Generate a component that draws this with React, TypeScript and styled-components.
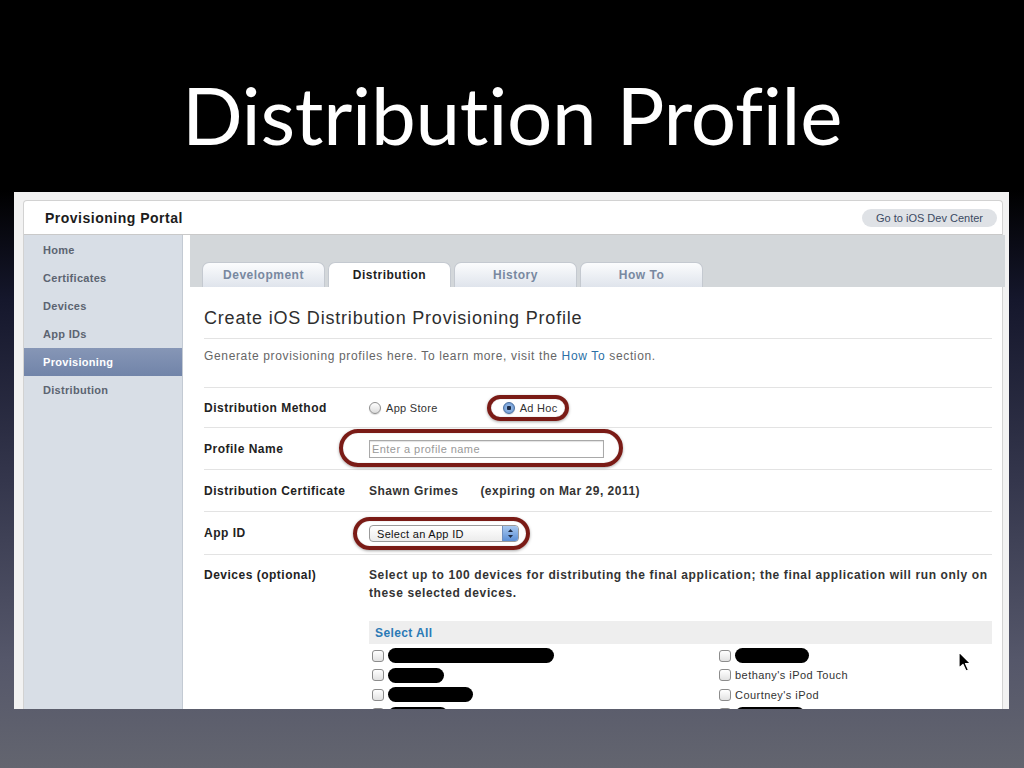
import React from 'react';
import styled, { createGlobalStyle } from 'styled-components';

const GlobalStyle = createGlobalStyle`
  html, body {
    margin: 0;
    padding: 0;
  }
  body {
    width: 1024px;
    height: 768px;
    overflow: hidden;
    background: linear-gradient(
      to bottom,
      #000 0px,
      #000 190px,
      #15172c 300px,
      #34364c 480px,
      #55576a 660px,
      #63656f 768px
    );
    font-family: "Liberation Sans", Arial, sans-serif;
  }
`;

const Slide = styled.div`
  width: 1024px;
  height: 768px;
  display: flex;
  flex-direction: column;
`;

const TitleArea = styled.div`
  height: 192px;
  box-sizing: border-box;
  padding-top: 74px;
  display: flex;
  justify-content: center;
`;

const SlideTitle = styled.h1`
  margin: 0;
  font-family: Lato, "Open Sans", sans-serif;
  font-weight: 400;
  font-size: 80px;
  line-height: 80px;
  color: #fff;
  font-variant-ligatures: none;
  font-feature-settings: "liga" 0;
  letter-spacing: -0.3px;
`;

const Shot = styled.div`
  position: relative;
  margin: 0 15px 0 14px;
  height: 517px;
  box-sizing: border-box;
  padding: 8px 6px 0 9px;
  background: #f2f2f2;
  overflow: hidden;
`;

const Page = styled.div`
  background: #fff;
  border: 1px solid #d2d2d2;
  border-bottom: none;
  border-radius: 4px 4px 0 0;
  height: 100%;
  display: flex;
  flex-direction: column;
`;

const Header = styled.div`
  height: 33px;
  flex-shrink: 0;
  display: flex;
  align-items: center;
  justify-content: space-between;
  padding: 0 5px 0 21px;
  border-bottom: 1px solid #c9c9c9;
`;

const PortalName = styled.div`
  font-size: 14px;
  font-weight: bold;
  letter-spacing: 0.5px;
  color: #1c1c1c;
`;

const DevCenterButton = styled.div`
  width: 135px;
  height: 18px;
  border-radius: 9px;
  background: #dfe2e6;
  color: #3b4a63;
  font-size: 11px;
  display: flex;
  align-items: center;
  justify-content: center;
`;

const Body = styled.div`
  flex: 1;
  display: grid;
  grid-template-columns: 159px 1fr;
  min-height: 0;
`;

const Sidebar = styled.nav`
  background: #d8dee6;
  border-right: 1px solid #c3cad3;
  padding-top: 1px;
  display: flex;
  flex-direction: column;
`;

const NavItem = styled.div<{ $active?: boolean }>`
  height: 28px;
  display: flex;
  align-items: center;
  padding-left: 19px;
  font-size: 11px;
  font-weight: bold;
  letter-spacing: 0.3px;
  color: ${(p) => (p.$active ? '#fff' : '#5c6471')};
  background: ${(p) =>
    p.$active ? 'linear-gradient(to bottom, #8696b6, #7184a9)' : 'transparent'};
`;

const Content = styled.div`
  padding-left: 7px;
  display: flex;
  flex-direction: column;
  min-width: 0;
`;

const TabBand = styled.div`
  height: 52px;
  flex-shrink: 0;
  background: #d3d7da;
  margin-right: -3px;
  display: flex;
  align-items: flex-end;
  gap: 3px;
  padding-left: 12px;
`;

const Tab = styled.div<{ $active?: boolean }>`
  width: 123px;
  height: 25px;
  box-sizing: border-box;
  border: 1px solid #c4c9d0;
  border-bottom: none;
  border-radius: 7px 7px 0 0;
  display: flex;
  align-items: center;
  justify-content: center;
  font-size: 12px;
  font-weight: bold;
  letter-spacing: 0.5px;
  color: ${(p) => (p.$active ? '#1e1e1e' : '#7888a0')};
  background: ${(p) =>
    p.$active ? '#fff' : 'linear-gradient(to bottom, #fbfcfd, #dfe4ec)'};
`;

const Main = styled.div`
  padding: 0 10px 0 14px;
`;

const Heading = styled.h2`
  margin: 0;
  padding: 20px 0 9px;
  font-size: 18px;
  line-height: 22px;
  font-weight: normal;
  letter-spacing: 0.8px;
  color: #2e2e2e;
  border-bottom: 1px solid #e3e3e3;
`;

const Intro = styled.p`
  margin: 0;
  padding: 9px 0 23px;
  font-size: 12px;
  line-height: 16px;
  letter-spacing: 0.65px;
  color: #666;
  border-bottom: 1px solid #e3e3e3;
`;

const Link = styled.span`
  color: #2a6fa6;
`;

const Row = styled.div<{ $h?: number; $top?: boolean }>`
  display: grid;
  grid-template-columns: 165px 1fr;
  align-items: ${(p) => (p.$top ? 'start' : 'center')};
  height: ${(p) => (p.$h ? `${p.$h}px` : 'auto')};
  padding-top: ${(p) => (p.$top ? '11px' : '0')};
  border-bottom: ${(p) => (p.$top ? 'none' : '1px solid #e3e3e3')};
`;

const Label = styled.div`
  font-size: 12px;
  font-weight: bold;
  letter-spacing: 0.5px;
  color: #222;
  line-height: 18px;
`;

const Options = styled.div`
  display: flex;
  align-items: center;
  gap: 65px;
`;

const RadioOption = styled.label`
  display: inline-flex;
  align-items: center;
  gap: 5px;
  font-size: 11px;
  letter-spacing: 0.3px;
  color: #333;
`;

const RadioDot = styled.span<{ $checked?: boolean }>`
  width: 12px;
  height: 12px;
  box-sizing: border-box;
  border-radius: 50%;
  border: 1px solid ${(p) => (p.$checked ? '#4a6fa0' : '#8e8e8e')};
  background: ${(p) =>
    p.$checked
      ? 'radial-gradient(circle, #1b2a44 0 2px, #8fb4e3 2.5px, #5f8dcc 100%)'
      : 'linear-gradient(to bottom, #fff, #dcdcdc)'};
  box-shadow: 0 1px 1px rgba(0, 0, 0, 0.15);
`;

const Ringed = styled.span<{ $t: number; $r: number; $b: number; $l: number }>`
  position: relative;
  display: inline-flex;
  align-items: center;

  &::after {
    content: '';
    position: absolute;
    top: ${(p) => -p.$t}px;
    right: ${(p) => -p.$r}px;
    bottom: ${(p) => -p.$b}px;
    left: ${(p) => -p.$l}px;
    border: 4px solid #7a1b16;
    border-radius: 22px;
    box-shadow: 0 1px 3px rgba(0, 0, 0, 0.35), inset 0 0 1px rgba(0, 0, 0, 0.4);
    pointer-events: none;
  }
`;

const TextInput = styled.input`
  width: 235px;
  height: 18px;
  box-sizing: border-box;
  margin: 0;
  border: 1px solid #a9a9a9;
  box-shadow: inset 0 1px 1px rgba(0, 0, 0, 0.12);
  padding: 0 2px;
  font-family: "Liberation Sans", Arial, sans-serif;
  font-size: 11px;
  letter-spacing: 0.45px;
  outline: none;

  &::placeholder {
    color: #999;
  }
`;

const CertValue = styled.div`
  display: flex;
  gap: 22px;
  font-size: 12px;
  font-weight: bold;
  letter-spacing: 0.5px;
  color: #333;
`;

const SelectBox = styled.div`
  width: 150px;
  height: 17px;
  box-sizing: border-box;
  border: 1px solid #9a9a9a;
  border-radius: 4px;
  background: linear-gradient(to bottom, #fff, #ececec);
  display: flex;
  align-items: center;
  justify-content: space-between;
  padding-left: 7px;
  font-size: 11px;
  letter-spacing: 0.3px;
  color: #111;
  overflow: hidden;
`;

const Stepper = styled.span`
  width: 15px;
  height: 100%;
  background: linear-gradient(to bottom, #a9c9f0, #5b8fd6);
  border-left: 1px solid #6f8fbf;
  display: flex;
  align-items: center;
  justify-content: center;
`;

const DevicesText = styled.div`
  font-size: 12px;
  font-weight: bold;
  line-height: 18px;
  letter-spacing: 0.62px;
  color: #333;
`;

const SelectAllBar = styled.div`
  margin-top: 19px;
  height: 23px;
  background: #eeeeee;
  display: flex;
  align-items: center;
  padding-left: 6px;
  font-size: 12px;
  font-weight: bold;
  letter-spacing: 0.4px;
  color: #2b7ab6;
`;

const DeviceGrid = styled.div`
  display: grid;
  grid-template-columns: 347px 1fr;
  padding: 2px 0 0 3px;
`;

const DeviceRow = styled.div`
  height: 19.5px;
  display: flex;
  align-items: center;
  gap: 4px;
  font-size: 11px;
  letter-spacing: 0.45px;
  color: #333;
`;

const CheckBox = styled.span`
  width: 12px;
  height: 12px;
  box-sizing: border-box;
  border: 1px solid #8c8c8c;
  border-radius: 3px;
  background: linear-gradient(to bottom, #fff, #e2e2e2);
  flex-shrink: 0;
`;

const Redacted = styled.span<{ $w: number }>`
  width: ${(p) => p.$w}px;
  height: 15px;
  border-radius: 8px;
  background: #000;
`;

const Cursor = styled.svg`
  position: absolute;
  left: 944px;
  top: 459px;
`;

const leftDevices = [166, 56, 85, 60];
const rightDevices: (number | string)[] = [74, "bethany's iPod Touch", "Courtney's iPod", 70];

const navItems = ['Home', 'Certificates', 'Devices', 'App IDs', 'Provisioning', 'Distribution'];
const tabs = ['Development', 'Distribution', 'History', 'How To'];

export default function App() {
  return (
    <Slide>
      <GlobalStyle />
      <TitleArea>
        <SlideTitle>Distribution Profile</SlideTitle>
      </TitleArea>
      <Shot>
        <Page>
          <Header>
            <PortalName>Provisioning Portal</PortalName>
            <DevCenterButton>Go to iOS Dev Center</DevCenterButton>
          </Header>
          <Body>
            <Sidebar>
              {navItems.map((item) => (
                <NavItem key={item} $active={item === 'Provisioning'}>
                  {item}
                </NavItem>
              ))}
            </Sidebar>
            <Content>
              <TabBand>
                {tabs.map((t) => (
                  <Tab key={t} $active={t === 'Distribution'}>
                    {t}
                  </Tab>
                ))}
              </TabBand>
              <Main>
                <Heading>Create iOS Distribution Provisioning Profile</Heading>
                <Intro>
                  Generate provisioning profiles here. To learn more, visit the{' '}
                  <Link>How To</Link> section.
                </Intro>

                <Row $h={39}>
                  <Label>Distribution Method</Label>
                  <Options>
                    <RadioOption>
                      <RadioDot />
                      App Store
                    </RadioOption>
                    <Ringed $t={7} $r={11} $b={7} $l={16}>
                      <RadioOption>
                        <RadioDot $checked />
                        Ad Hoc
                      </RadioOption>
                    </Ringed>
                  </Options>
                </Row>

                <Row $h={41}>
                  <Label>Profile Name</Label>
                  <div>
                    <Ringed $t={11} $r={19} $b={9} $l={30}>
                      <TextInput placeholder="Enter a profile name" />
                    </Ringed>
                  </div>
                </Row>

                <Row $h={41}>
                  <Label>Distribution Certificate</Label>
                  <CertValue>
                    <span>Shawn Grimes</span>
                    <span>(expiring on Mar 29, 2011)</span>
                  </CertValue>
                </Row>

                <Row $h={42}>
                  <Label>App ID</Label>
                  <div>
                    <Ringed $t={8} $r={11} $b={8} $l={16}>
                      <SelectBox>
                        Select an App ID
                        <Stepper>
                          <svg width="7" height="11" viewBox="0 0 7 11">
                            <path d="M3.5 1 L6 4 L1 4 Z" fill="#1d2b45" />
                            <path d="M3.5 10 L6 7 L1 7 Z" fill="#1d2b45" />
                          </svg>
                        </Stepper>
                      </SelectBox>
                    </Ringed>
                  </div>
                </Row>

                <Row $top>
                  <Label>Devices (optional)</Label>
                  <div>
                    <DevicesText>
                      Select up to 100 devices for distributing the final application; the final
                      application will run only on these selected devices.
                    </DevicesText>
                    <SelectAllBar>Select All</SelectAllBar>
                    <DeviceGrid>
                      <div>
                        {leftDevices.map((w, i) => (
                          <DeviceRow key={i}>
                            <CheckBox />
                            <Redacted $w={w} />
                          </DeviceRow>
                        ))}
                      </div>
                      <div>
                        {rightDevices.map((d, i) => (
                          <DeviceRow key={i}>
                            <CheckBox />
                            {typeof d === 'number' ? <Redacted $w={d} /> : d}
                          </DeviceRow>
                        ))}
                      </div>
                    </DeviceGrid>
                  </div>
                </Row>
              </Main>
            </Content>
          </Body>
        </Page>
        <Cursor width="14" height="22" viewBox="0 0 14 22">
          <path
            d="M1 1 L1 17 L5 13.5 L8 20 L10.5 19 L7.5 12.5 L12.5 12.5 Z"
            fill="#000"
            stroke="#fff"
            strokeWidth="1.2"
            strokeLinejoin="round"
          />
        </Cursor>
      </Shot>
    </Slide>
  );
}
